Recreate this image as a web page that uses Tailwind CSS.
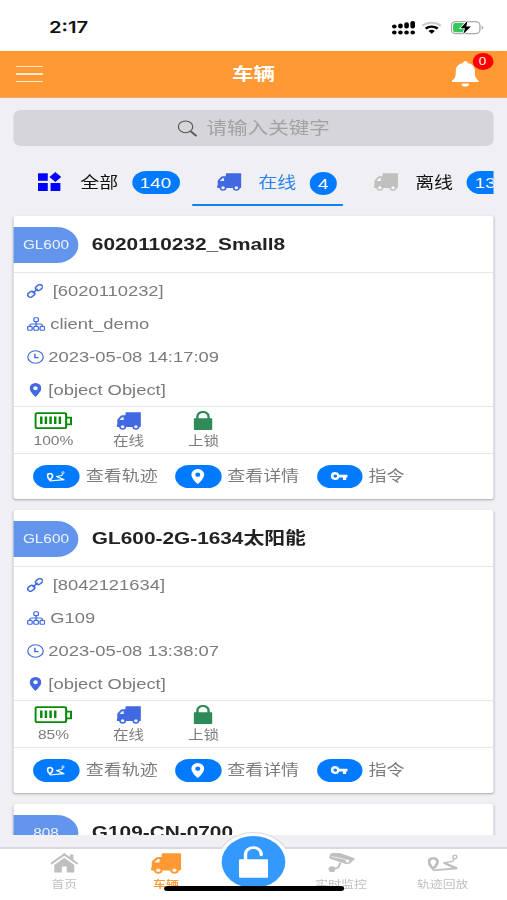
<!DOCTYPE html>
<html lang="zh">
  <head>
    <meta charset="UTF-8" />
    <meta name="viewport" content="width=device-width, initial-scale=1.0" />
    <title>车辆</title>
    <script src="https://cdn.jsdelivr.net/npm/@tailwindcss/browser@4"></script>
  </head>
  <body class="w-[507px] h-[900px] overflow-hidden bg-[#efeff4]">
    <!-- Icons -->
    <svg class="hidden">
      <symbol id="truck" viewBox="0 0 24 20" preserveAspectRatio="none">
        <path fill="currentColor" d="M8.700 1.300Q8.700 .3 9.700 .3H23Q24 .3 24 1.300V15.500Q24 16.600 23 16.600H1.200Q.3 16.600.3 15.700V14.500Q.3 14 .9 13.800V9Q.9 8.300 1.400 7.700L4.300 4.300Q4.900 3.700 5.700 3.700H8.700Z" />
        <path fill="#fff" fill-opacity=".9" d="M2.900 9 5.400 5.700H7V9Z" />
        <circle cx="6" cy="16.400" r="3.300" fill="currentColor" />
        <circle cx="18.700" cy="16.400" r="3.300" fill="currentColor" />
        <circle cx="6" cy="16.400" r="1.700" fill="#fff" fill-opacity=".9" />
        <circle cx="18.700" cy="16.400" r="1.700" fill="#fff" fill-opacity=".9" />
      </symbol>
      <symbol id="pin" viewBox="0 0 14 18" preserveAspectRatio="none">
        <path fill="currentColor" fill-rule="evenodd" d="M7 0a6.700 6.700 0 0 1 6.700 6.800C13.700 11.500 7 18 7 18S.3 11.500.3 6.800A6.700 6.700 0 0 1 7 0Zm0 4.200a2.600 2.600 0 1 0 0 5.200 2.600 2.600 0 0 0 0-5.200Z" />
      </symbol>
      <symbol id="route" viewBox="0 0 26 18" preserveAspectRatio="none">
        <path fill="none" stroke="currentColor" stroke-width="2.500" d="M4.900 4.200a3.600 3.600 0 0 1 3.700 3.600C8.600 10.500 4.900 15 4.900 15S1.300 10.500 1.300 7.800A3.600 3.600 0 0 1 4.900 4.200Z" />
        <path fill="currentColor" d="M4.500 17.300 7 15.200 21 13.700 13.500 9.800V8.200L21.300 6.700 22.700 4.500 23.500 5 22 8 16.700 9 25.500 13.300V15.300Z" />
        <circle cx="23.300" cy="2.900" r="1.700" fill="none" stroke="currentColor" stroke-width="1.200" />
      </symbol>
      <symbol id="key" viewBox="0 0 16 9" preserveAspectRatio="none">
        <path fill="currentColor" fill-rule="evenodd" d="M4.300 0A4.200 4.200 0 0 1 8.200 2.800H16V5.800H14.500V8.500H11.500V5.800H8.200A4.200 4.200 0 1 1 4.300 0Zm0 2.600a1.700 1.700 0 1 0 0 3.400 1.700 1.700 0 0 0 0-3.400Z" />
      </symbol>
      <symbol id="link" viewBox="0 0 14 14" preserveAspectRatio="none">
        <g fill="none" stroke="currentColor" stroke-width="1.400" stroke-linecap="round">
          <rect x="-3.200" y="-2.300" width="6.400" height="4.600" rx="2.300" transform="translate(3.600 10.300) rotate(-45)" />
          <rect x="-3.200" y="-2.300" width="6.400" height="4.600" rx="2.300" transform="translate(10.300 3.600) rotate(-45)" />
          <path d="M5.200 8.800 8.800 5.200" />
        </g>
      </symbol>
      <symbol id="sitemap" viewBox="0 0 16 14" preserveAspectRatio="none">
        <g fill="none" stroke="currentColor" stroke-width="1.100">
          <rect x="6" y=".7" width="4" height="3.900" rx="1" />
          <rect x=".6" y="9.400" width="4" height="3.900" rx="1" />
          <rect x="6" y="9.400" width="4" height="3.900" rx="1" />
          <rect x="11.400" y="9.400" width="4" height="3.900" rx="1" />
          <path d="M8 4.600V9.400M2.600 9.400V8.500Q2.600 7 4 7H12Q13.400 7 13.400 8.500V9.400" />
        </g>
      </symbol>
      <symbol id="clock" viewBox="0 0 14 14">
        <g fill="none" stroke="currentColor">
          <circle cx="7" cy="7" r="6.300" stroke-width="1" />
          <path stroke-width="1.200" d="M6.500 3.800V7.600H9.500" />
        </g>
      </symbol>
      <symbol id="lock" viewBox="0 0 16 19" preserveAspectRatio="none">
        <path fill="none" stroke="currentColor" stroke-width="2" d="M3.300 9V5.600a4.700 4.700 0 0 1 9.400 0V9" />
        <rect x="0" y="7.300" width="16" height="11.700" rx="1" fill="currentColor" />
      </symbol>
    </svg>

    <div
      class="w-[414px] h-[900px] origin-top-left scale-x-[1.2246] flex flex-col overflow-hidden font-['Liberation_Sans','Noto_Sans_CJK_SC',sans-serif]"
    >
      <!-- Status bar -->
      <div class="h-[51px] shrink-0 bg-white flex items-center justify-between pl-10 pr-[19px] pt-1">
        <span class="font-['Inter',sans-serif] font-semibold text-[16.500px] text-[#111]">2:17</span>
        <div class="flex items-center gap-[5px]">
          <svg class="w-[19px] h-[14px]" viewBox="0 0 19 14">
            <g stroke="#000" stroke-width="3.800" stroke-linecap="round">
              <path d="M2 5.500V5.600M7 4.500V5.600M12 3.200V5.600M17 1.900V5.600" />
              <path d="M2 11.500H2.010M7 11.500H7.010M12 11.500H12.010M17 11.500H17.010" />
            </g>
          </svg>
          <svg class="w-[17px] h-[13px]" viewBox="0 0 17 13">
            <g fill="none" stroke-width="2">
              <path stroke="#ccc" d="M.9 4.800a10.800 10.800 0 0 1 15.200 0" />
              <path stroke="#000" stroke-width="2.200" d="M3.600 7.600a7 7 0 0 1 9.800 0" />
            </g>
            <path d="M8.500 12.700 5.900 10.100a3.700 3.700 0 0 1 5.200 0Z" />
          </svg>
          <svg class="ml-0.5 w-[27px] h-[15px]" viewBox="0 0 27 15">
            <rect x=".6" y="1.600" width="23.300" height="12" rx="3.600" fill="none" stroke="#aaa" stroke-width="1.100" />
            <rect x="2" y="3" width="10" height="9.200" rx="2" fill="#34c759" />
            <path d="M25.300 5.700v3.800q1.300-.5 1.300-1.900t-1.300-1.900Z" fill="#aaa" />
            <path d="M13.800.8 8 8.300h3.700L10.300 14 16.600 6.400H12.700Z" stroke="#fff" stroke-width="1.400" paint-order="stroke" />
          </svg>
        </div>
      </div>

      <!-- Header -->
      <div class="h-[47px] shrink-0 bg-[#ff9933] border-b border-[#f5a963] flex items-center justify-between pl-[13px] pr-[23px]">
        <div class="w-[22px] flex flex-col gap-[6px]">
          <div class="h-[1.500px] bg-[#ffe9d2]"></div>
          <div class="h-[1.500px] bg-[#ffe9d2]"></div>
          <div class="h-[1.500px] bg-[#ffe9d2]"></div>
        </div>
        <h1 class="pl-[10px] pt-px text-[17.500px] font-bold text-white">车辆</h1>
        <div class="relative">
          <svg class="w-[22px] h-[26px]" viewBox="0 0 22 26">
            <path fill="#fff" d="M11 0a1.800 1.800 0 0 1 1.800 2c4 .9 6 4 6 8 0 6 .8 7.600 2.800 9.300q.6.600.2 1.700H.2q-.4-1.100.2-1.700C2.400 17.600 3.200 16 3.200 10c0-4 2-7.100 6-8A1.800 1.800 0 0 1 11 0ZM7.900 22.500h6.200a3.100 3.100 0 0 1-6.200 0Z" />
          </svg>
          <span class="absolute -top-[8px] left-[16.500px] size-[17px] rounded-full bg-[#f00] text-white text-[11px] leading-[17px] text-center">0</span>
        </div>
      </div>

      <!-- Search and list -->
      <div class="h-[737px] shrink-0 overflow-hidden px-[11px] pt-3">
        <div class="h-[36px] rounded-md bg-[#d5d5da] flex items-center justify-center gap-[8px]">
          <svg class="w-[16px] h-[17px]" viewBox="0 0 16 17" fill="none" stroke="#58585a">
            <circle cx="6.500" cy="6.800" r="5.900" stroke-width="1" />
            <path d="M10.800 11.400 15.500 16.200" stroke-width="1.700" />
          </svg>
          <span class="text-[16.800px] text-[#a2a2a5] pt-px">请输入关键字</span>
        </div>

        <div class="h-[59.500px] flex overflow-hidden text-[15.500px] text-[#111]">
          <div class="w-[146px] shrink-0 flex items-center pl-[20px] pt-[14px]">
            <svg class="w-[19px] h-[19px] -mt-[2px]" viewBox="0 0 19 19" fill="#0000ff">
              <rect x="0" y="1.300" width="8" height="7.500" />
              <rect x="0" y="11" width="8" height="8" />
              <rect x="10.300" y="11" width="8" height="8" />
              <path d="M14.200 0 19 5 14.200 10 9.400 5Z" />
            </svg>
            <span class="ml-[15.500px]">全部</span>
            <span class="ml-[11px] h-[23px] w-[39px] rounded-full bg-[#007bff] text-white text-center leading-[24px] shrink-0">140</span>
          </div>
          <div class="w-[123px] shrink-0 flex items-center pl-[19.500px] pt-[16.500px] border-b-[2.500px] border-[#1280f0] text-[#2b85ee]">
            <svg class="w-[20.500px] h-[18px] -mt-[2px] text-[#4169e1]"><use href="#truck" /></svg>
            <span class="ml-[14px]">在线</span>
            <span class="ml-[11px] h-[23px] w-[22px] rounded-full bg-[#007bff] text-white text-center leading-[24px] shrink-0">4</span>
          </div>
          <div class="w-[150px] shrink-0 flex items-center pl-[24.500px] pt-[14px]">
            <svg class="w-[20.500px] h-[18px] -mt-[2px] text-[#c0c0c0]"><use href="#truck" /></svg>
            <span class="ml-[14px]">离线</span>
            <span class="ml-[11px] h-[23px] w-[39px] rounded-full bg-[#007bff] text-white text-center leading-[24px] shrink-0">136</span>
          </div>
        </div>

        <div id="list" class="pt-[10.500px] flex flex-col gap-[11px]"></div>
      </div>

      <div class="h-[12px] shrink-0"></div>

      <!-- Bottom tabs -->
      <div class="relative h-[53px] shrink-0 bg-white border-t-2 border-[#dadadd] px-[11px] flex text-[10.500px] leading-[14px] text-[#bfbfbf]">
        <div class="w-[83px] flex flex-col items-center pt-[4px]">
          <svg class="w-[23px] h-[20px]" viewBox="0 0 23 20" fill="currentColor">
            <path d="M11.500 0 16 4V1.500H19V6.700L23 10.200 21.700 11.600 11.500 2.800 1.300 11.600 0 10.200Z" />
            <path d="M11.500 4.800 19.700 12V19.500H13.500V13.500H9.500V19.500H3.300V12Z" />
          </svg>
          <span class="mt-[4px]">首页</span>
        </div>
        <div class="w-[83px] flex flex-col items-center pt-[4px] text-[#ff9933]">
          <svg class="w-[25px] h-[21px]"><use href="#truck" /></svg>
          <span class="mt-[3px] font-medium">车辆</span>
        </div>
        <div class="w-[60px]"></div>
        <div class="w-[83px] flex flex-col items-center pt-[4px]">
          <svg class="w-[22px] h-[20px]" viewBox="0 0 22 20" fill="currentColor">
            <path d="M1.800 1.200Q2.300 0 4 0H9.500L21.500 5.300Q22 5.600 21.500 6.300L18.700 9.600Q17 11.600 14.500 11L1.500 5.800Q.4 5.300.8 4Z" />
            <path d="M10 9.500 8.200 14.500 4 16" fill="none" stroke="currentColor" stroke-width="1.700" />
            <path d="M2 13.200 5.500 13.800 5.800 18Q3.500 20 1 18.500L0 15.500Z" />
            <path d="M2.500 3.500 15.300 6.800" stroke="#fff" stroke-width=".6" />
            <circle cx="15.800" cy="8" r="1.500" fill="#fff" />
          </svg>
          <span class="mt-[4px]">实时监控</span>
        </div>
        <div class="w-[83px] flex flex-col items-center pt-[5px]">
          <svg class="w-[25px] h-[18px]"><use href="#route" /></svg>
          <span class="mt-[5px]">轨迹回放</span>
        </div>

        <!-- Unlock button -->
        <div class="absolute -top-[17px] left-[177px] w-[60px] h-[60px] rounded-full bg-[#dadadd] [clip-path:inset(0_0_43px_0)]"></div>
        <div class="absolute -top-[16px] left-[178px] size-[58px] rounded-full bg-white flex items-center justify-center">
          <div class="size-[52.500px] rounded-full bg-[#3399ff] flex items-center justify-center">
            <svg class="w-[24px] h-[32px]" viewBox="0 0 24 32">
              <path fill="none" stroke="#fff" stroke-width="2.800" stroke-linecap="round" d="M5.500 14V8a6.400 6.400 0 0 1 12.800 0V8.800" />
              <rect x="0" y="13.300" width="24" height="18.500" rx="1.200" fill="#fff" />
            </svg>
          </div>
        </div>
        <div class="absolute top-[36.500px] left-[134px] w-[147px] h-[5px] rounded-full bg-black"></div>
      </div>
    </div>

    <script>
      const vehicles = [
        { type: "GL600", name: "6020110232_Small8", id: "6020110232", group: "client_demo", time: "2023-05-08 14:17:09", battery: 100 },
        { type: "GL600", name: "GL600-2G-1634太阳能", id: "8042121634", group: "G109", time: "2023-05-08 13:38:07", battery: 85 },
        { type: "808", name: "G109-CN-0700", id: "", group: "", time: "", battery: 100 },
      ];

      // five bars when full, four below that
      function batteryBars(level) {
        const count = level > 90 ? 5 : 4;
        let bars = "";
        for (let i = 0; i < count; i++) {
          bars += `<rect x="${4.7 + i * 3.8}" y="5.500" width="2" height="7.500" fill="#0a8a0a" />`;
        }
        return bars;
      }

      document.getElementById("list").innerHTML = vehicles
        .map(
          (v) => `
        <div class="h-[283px] shrink-0 bg-white rounded-[2px] shadow-[0_1px_2px_rgba(0,0,0,0.3)] text-[15px] text-[#7b7b7b]">
          <div class="h-[57px] border-b-[1.500px] border-[#e6e6e8] pt-[2px] flex items-center">
            <div class="w-[53px] h-[36px] rounded-r-full bg-[#6495ed] text-[#eef3fd] text-[12.500px] flex items-center justify-center">${v.type}</div>
            <h2 class="ml-[11px] text-[17px] font-bold text-[#222]">${v.name}</h2>
          </div>
          <div class="h-[134px] border-b-[1.500px] border-[#e6e6e8] pl-[10.500px] pt-[2px] text-[#4169e1]">
            <div class="h-[33px] flex items-center">
              <svg class="w-[13.500px] h-[14px] mr-[8px] -mt-px"><use href="#link" /></svg>
              <span class="text-[#7b7b7b]">[${v.id}]</span>
            </div>
            <div class="h-[33px] flex items-center">
              <svg class="w-[15px] h-[14px] mr-[4.500px] -mt-px"><use href="#sitemap" /></svg>
              <span class="text-[#7b7b7b]">${v.group}</span>
            </div>
            <div class="h-[33px] flex items-center">
              <svg class="w-[14px] h-[14px] mr-[4px] -mt-px"><use href="#clock" /></svg>
              <span class="text-[#7b7b7b]">${v.time}</span>
            </div>
            <div class="h-[33px] flex items-center">
              <svg class="w-[10px] h-[14px] ml-[2px] mr-[6px] -mt-px"><use href="#pin" /></svg>
              <span class="text-[#7b7b7b]">[object Object]</span>
            </div>
          </div>
          <div class="h-[47px] border-b border-[#e6e6e8] pl-[2px] pt-[4px] flex text-[12.700px] leading-[18px]">
            <div class="w-[61.300px] flex flex-col items-center">
              <svg class="w-[31px] h-[19px]" viewBox="0 0 31 19">
                <rect x="1" y="2.200" width="25" height="15" rx="1.500" fill="none" stroke="#0a8a0a" stroke-width="1.700" />
                <path d="M26 6.700H30V13.300H26" fill="none" stroke="#0a8a0a" stroke-width="1.700" />
                ${batteryBars(v.battery)}
              </svg>
              <span class="mt-[2px]">${v.battery}%</span>
            </div>
            <div class="w-[61.300px] flex flex-col items-center">
              <svg class="w-[20.500px] h-[18px] mt-px text-[#4169e1]"><use href="#truck" /></svg>
              <span class="mt-[2px]">在线</span>
            </div>
            <div class="w-[61.300px] flex flex-col items-center">
              <svg class="w-[15.500px] h-[19px] text-[#2e8b57]"><use href="#lock" /></svg>
              <span class="mt-[2px]">上锁</span>
            </div>
          </div>
          <div class="h-[45px] flex items-center pl-[16px] text-[14.700px]">
            <div class="w-[37.500px] h-[22.500px] rounded-full bg-[#007bff] text-white flex items-center justify-center">
              <svg class="w-[15px] h-[11px]"><use href="#route" /></svg>
            </div>
            <span class="ml-[5.500px] w-[73px]">查看轨迹</span>
            <div class="w-[37.500px] h-[22.500px] rounded-full bg-[#007bff] text-white flex items-center justify-center">
              <svg class="w-[11px] h-[15px]"><use href="#pin" /></svg>
            </div>
            <span class="ml-[5px] w-[73px]">查看详情</span>
            <div class="w-[37.500px] h-[22.500px] rounded-full bg-[#007bff] text-white flex items-center justify-center">
              <svg class="w-[14px] h-[8.500px]"><use href="#key" /></svg>
            </div>
            <span class="ml-[5px]">指令</span>
          </div>
        </div>`
        )
        .join("");
    </script>
  </body>
</html>
